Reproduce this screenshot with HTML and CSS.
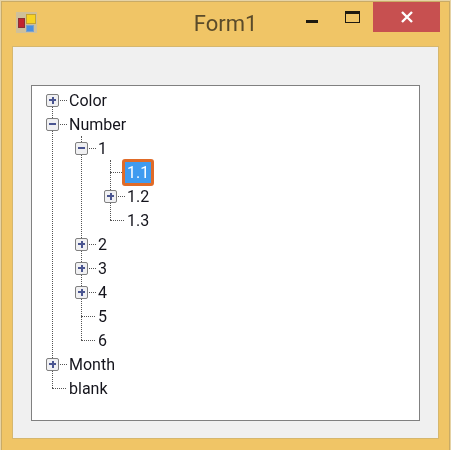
FILE: index.html
```html
<!DOCTYPE html>
<html lang="en">
<head>
    <meta charset="UTF-8">
    <meta name="viewport" content="width=device-width, initial-scale=1.0">
    <title>Form1</title>
    <link rel="stylesheet" href="styles.css">
</head>
<body>
    <div class="window">
        <div class="titlebar">
            <div class="app-icon">
                <span class="app-red"></span>
                <span class="app-yellow"></span>
                <span class="app-blue"></span>
            </div>
            <div class="title">Form1</div>
            <div class="controls">
                <span class="min"></span>
                <span class="max"></span>
                <span class="close">
                    <svg width="12" height="12" viewBox="0 0 12 12">
                        <path d="M1 1L11 11M11 1L1 11" stroke="#fff" stroke-width="2.4" fill="none"/>
                    </svg>
                </span>
            </div>
        </div>

        <div class="client">
            <div class="listbox">
                <ul class="tree">
                    <li><div class="row"><span class="exp plus"></span><span class="dash"></span><span class="label">Color</span></div></li>
                    <li>
                        <div class="row"><span class="exp minus"></span><span class="dash"></span><span class="label">Number</span></div>
                        <ul>
                            <li>
                                <div class="row"><span class="exp minus"></span><span class="dash"></span><span class="label">1</span></div>
                                <ul>
                                    <li><div class="row"><span class="dash long"></span><span class="label selected">1.1</span></div></li>
                                    <li><div class="row"><span class="exp plus"></span><span class="dash"></span><span class="label">1.2</span></div></li>
                                    <li><div class="row"><span class="dash long"></span><span class="label">1.3</span></div></li>
                                </ul>
                            </li>
                            <li><div class="row"><span class="exp plus"></span><span class="dash"></span><span class="label">2</span></div></li>
                            <li><div class="row"><span class="exp plus"></span><span class="dash"></span><span class="label">3</span></div></li>
                            <li><div class="row"><span class="exp plus"></span><span class="dash"></span><span class="label">4</span></div></li>
                            <li><div class="row"><span class="dash long"></span><span class="label">5</span></div></li>
                            <li><div class="row"><span class="dash long"></span><span class="label">6</span></div></li>
                        </ul>
                    </li>
                    <li><div class="row"><span class="exp plus"></span><span class="dash"></span><span class="label">Month</span></div></li>
                    <li><div class="row"><span class="dash long"></span><span class="label">blank</span></div></li>
                </ul>
            </div>
        </div>
    </div>
</body>
</html>
```

FILE: styles.css
```css
* {
    margin: 0;
    padding: 0;
    box-sizing: border-box;
}

html, body {
    height: 100%;
}

body {
    background: #e6d3a6;
    font-family: Roboto, "Liberation Sans", sans-serif;
    overflow: hidden;
    padding: 1px 1px 0 1px;
}

.window {
    height: 449px;
    background: #f0c566;
    border: 1px solid #c9ab66;
    border-bottom: none;
    padding: 0 10px 11px 10px;
    display: flex;
    flex-direction: column;
    filter: blur(0.35px);
}

/* title bar */
.titlebar {
    height: 44px;
    flex: none;
    display: grid;
    grid-template-columns: 1fr auto 1fr;
    margin: 0 -10px;
}

.app-icon {
    width: 21px;
    height: 21px;
    margin: 10px 0 0 14px;
    background: #cfc09a;
    display: grid;
    grid-template-columns: 8px 10px;
    grid-template-rows: 10px 7px;
    column-gap: 1px;
    row-gap: 1px;
    padding: 2px 1px;
}

.app-red {
    grid-row: 1 / 3;
    align-self: center;
    height: 10px;
    width: 7px;
    margin-left: 1px;
    background: #c2242f;
    border: 1px solid #8a3036;
}

.app-yellow {
    background: #f7d223;
    border: 1px solid #c2a236;
}

.app-blue {
    background: #4a90e0;
    border: 1px solid #7aa0cc;
    width: 8px;
}

.title {
    font-size: 22px;
    line-height: 43px;
    color: #5a4b2a;
}

.controls {
    display: flex;
    justify-content: flex-end;
    align-items: flex-start;
    padding-right: 9px;
}

.min {
    width: 12px;
    height: 3px;
    margin-top: 18px;
    background: #1e1a10;
}

.max {
    width: 15px;
    height: 12px;
    margin: 9px 13px 0 27px;
    border: 1px solid #1e1a10;
    border-top-width: 3px;
}

.close {
    width: 67px;
    height: 30px;
    background: #c75050;
    display: flex;
    align-items: center;
    justify-content: center;
}

/* form body */
.client {
    flex: 1;
    background: #f0f0f0;
    border: 1px solid #d6b76e;
    padding: 38px 18px 17px 18px;
    display: flex;
}

.listbox {
    flex: 1;
    background: #fff;
    border: 1px solid #808080;
    padding: 2px 0 0 14px;
}

/* tree */
ul {
    list-style: none;
    position: relative;
}

ul ul {
    margin-left: 29px;
}

/* vertical guide, stops at the middle of the last leaf row */
ul::before {
    content: "";
    position: absolute;
    left: 6px;
    top: 0;
    bottom: 12px;
    border-left: 1px dotted #555;
}

.tree::before {
    top: 12px;
}

.row {
    height: 24px;
    display: flex;
    align-items: center;
    position: relative;
}

.exp {
    width: 13px;
    height: 13px;
    flex: none;
    background: #f0f0f2;
    border: 1px solid #808080;
    border-radius: 2px;
    position: relative;
    z-index: 1;
}

.exp::before {
    content: "";
    position: absolute;
    left: 2px;
    top: 4px;
    width: 7px;
    height: 2px;
    background: #4a5590;
}

.plus::after {
    content: "";
    position: absolute;
    left: 4.5px;
    top: 2px;
    width: 2px;
    height: 7px;
    background: #4a5590;
}

.dash {
    width: 7px;
    margin: 0 2px 0 1px;
    border-bottom: 1px dotted #555;
}

.dash.long {
    width: 14px;
    margin: 0 3px 0 6px;
}

.label {
    font-size: 16px;
    color: #14141c;
    white-space: nowrap;
}

.label.selected {
    position: relative;
    margin-left: -5px;
    height: 27px;
    line-height: 21px;
    padding: 0 2px;
    color: #fff;
    background: #3f9bf0;
    border: 3px solid #e06b28;
    border-radius: 3px;
}
```
